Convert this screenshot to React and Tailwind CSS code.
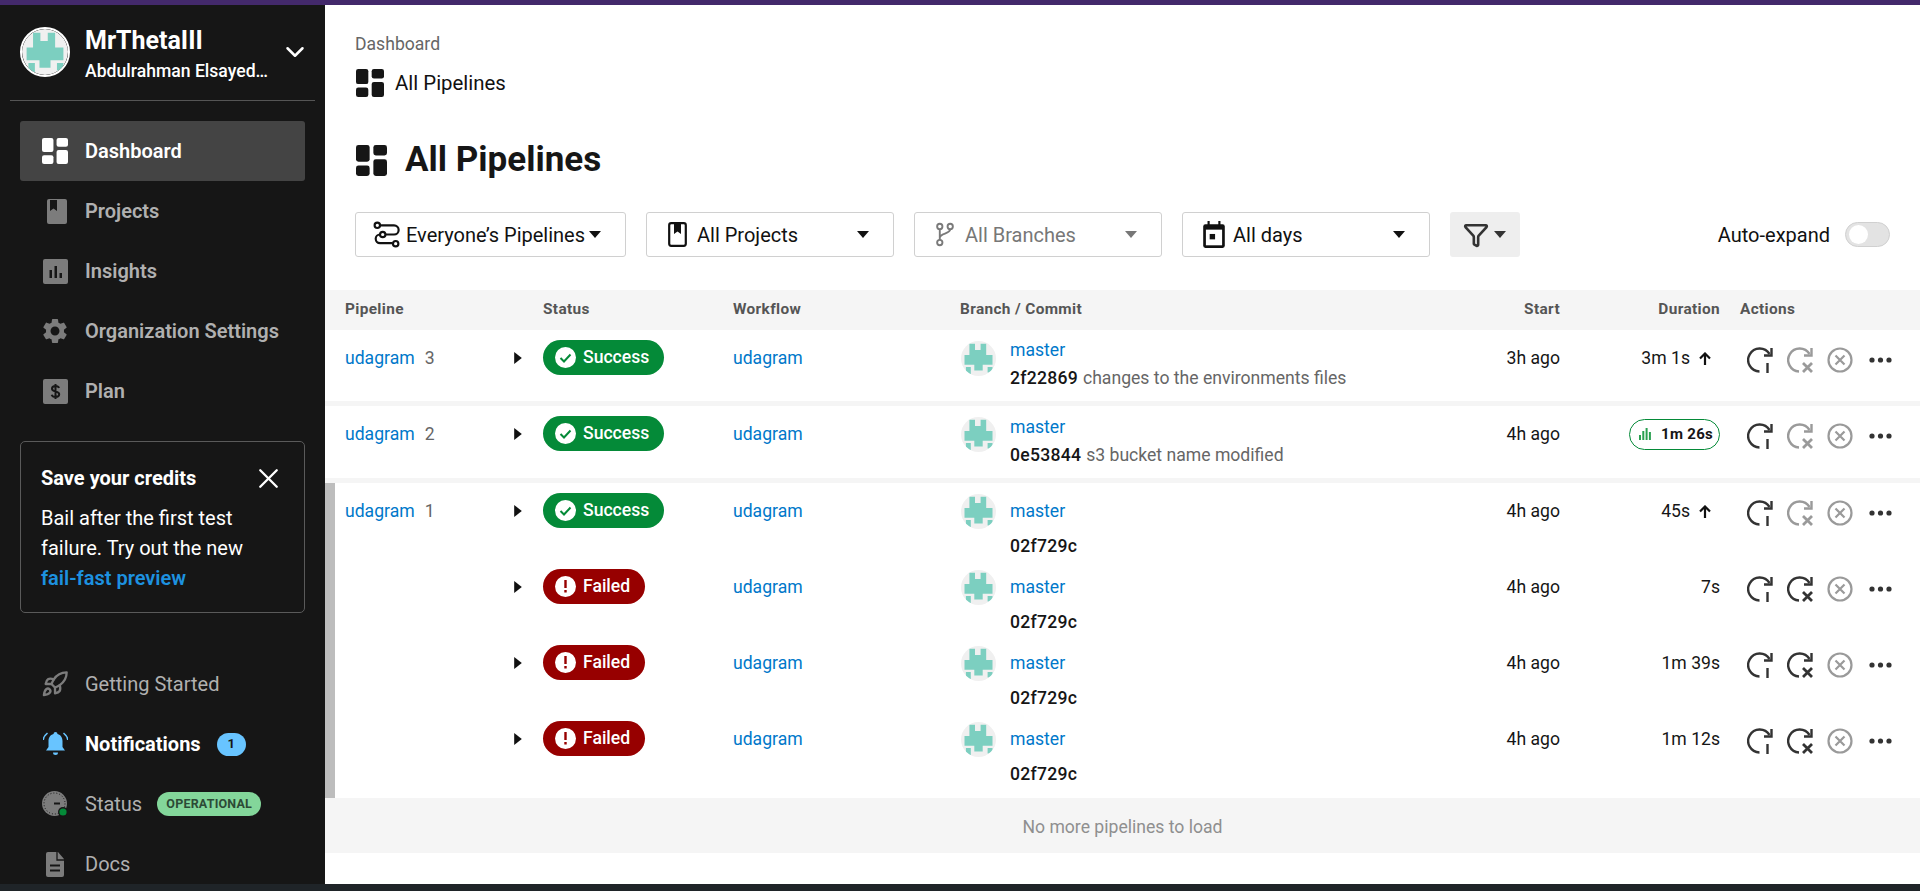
import React from "react";
import { MdSettings } from "react-icons/md";
import { Rocket, X, ChevronDown, Funnel } from "lucide-react";

const Dash = ({ className }) => (
  <svg viewBox="0 0 25 25" className={className} fill="currentColor">
    <rect x="0" y="0" width="11" height="13.5" rx="2" />
    <rect x="0" y="16.5" width="11" height="8.5" rx="2" />
    <rect x="14" y="0" width="11" height="8.5" rx="2" />
    <rect x="14" y="11.5" width="11" height="13.5" rx="2" />
  </svg>
);

const Avatar = ({ className }) => (
  <svg viewBox="0 0 50 50" className={className}>
    <clipPath id="avatarClip"><circle cx="25" cy="25" r="25" /></clipPath>
    <g clipPath="url(#avatarClip)">
      <rect width="50" height="50" fill="#f0f0f0" />
      <path d="M12 4h8v9h8V4h8v16h9v14H31v8H19v-8H5V20h7z" fill="#7ccfc0" />
      <path d="M7 37h7v10H7zM38 37h7v8h-7z" fill="#7ccfc0" />
    </g>
  </svg>
);

const NavBook = () => (
  <svg viewBox="0 0 25 25" className="w-[25px] h-[25px]" fill="#7c7c7c">
    <path d="M4 2a2 2 0 0 1 2-2h16a2 2 0 0 1 2 2v21a2 2 0 0 1-2 2H6a2 2 0 0 1-2-2z" />
    <path d="M6 0h7v11l-3.500-2.500L6 11z" fill="#161616" transform="translate(1 1)" />
  </svg>
);
const NavInsights = () => (
  <svg viewBox="0 0 25 25" className="w-[25px] h-[25px]">
    <rect width="25" height="25" rx="2" fill="#7c7c7c" />
    <path d="M6.500 11h2.500v8H6.500zM11.500 7h2.500v12h-2.500zM16.500 14h2.500v5h-2.500z" fill="#161616" />
  </svg>
);
const NavPlan = () => (
  <svg viewBox="0 0 25 25" className="w-[25px] h-[25px]">
    <rect width="25" height="25" rx="2" fill="#7c7c7c" />
    <path d="M16 9c-.5-1.500-2-2-3.500-2-2 0-3.500 1-3.500 2.700 0 3.600 7.200 2 7.200 5.600 0 1.800-1.700 2.700-3.700 2.700-1.700 0-3.300-.7-3.800-2.300M12.500 5v15" stroke="#161616" strokeWidth="2" fill="none" />
  </svg>
);
const NavBell = () => (
  <svg viewBox="0 0 25 25" className="w-[25px] h-[25px]" fill="#68c4ff">
    <path d="M12.500 0a2 2 0 0 1 2 2c3.500 1 5 4 5 7v6l2.500 3.500H3L5.500 15V9c0-3 1.500-6 5-7a2 2 0 0 1 2-2zM10 20.500h5a2.500 2.500 0 0 1-5 0z" />
    <path d="M4.500 1C2 3 .6 5 .2 8M20.500 1C23 3 24.400 5 24.800 8" stroke="#68c4ff" strokeWidth="1.600" fill="none" />
  </svg>
);
const NavStatus = () => (
  <svg viewBox="0 0 26 26" className="w-[26px] h-[26px]">
    <circle cx="12.500" cy="12.500" r="12.500" fill="#7c7c7c" />
    <circle cx="12.500" cy="12.500" r="10.500" fill="none" stroke="#161616" strokeWidth="1" strokeDasharray="1 2" />
    <path d="M12 11.500h6v2h-6z" fill="#161616" />
    <circle cx="21" cy="21" r="5" fill="#161616" />
    <circle cx="21" cy="21" r="3.600" fill="#048a38" />
  </svg>
);
const NavDoc = () => (
  <svg viewBox="0 0 25 25" className="w-[25px] h-[25px]">
    <path d="M5 0h10l6 7v16a2 2 0 0 1-2 2H5a2 2 0 0 1-2-2V2a2 2 0 0 1 2-2z" fill="#7c7c7c" />
    <path d="M14 0v8h7" fill="none" stroke="#161616" strokeWidth="1.300" />
    <path d="M7 12.500h10v2H7zM7 17.500h10v2H7z" fill="#161616" />
  </svg>
);

const Caret = ({ color = "#111" }) => (
  <svg viewBox="0 0 12 7" className="w-3 h-[7px]"><path d="M0 0h12L6 7z" fill={color} /></svg>
);

const IconPeople = () => (
  <svg viewBox="0 0 25 25" className="w-[27px] h-[27px]" fill="none" stroke="#111" strokeWidth="2">
    <circle cx="4" cy="4" r="2.500" />
    <path d="M6.500 4h13a3.500 3.500 0 0 1 0 8.500H6.500a3.500 3.500 0 0 0 0 8H18" />
    <circle cx="21" cy="21" r="2.500" />
    <circle cx="9" cy="12.500" r="2.500" fill="#fff" />
  </svg>
);
const IconProject = () => (
  <svg viewBox="0 0 19 25" className="w-[19px] h-[25px]" fill="none">
    <rect x="1.200" y="1.200" width="16.600" height="22.600" rx="2" stroke="#111" strokeWidth="2.200" />
    <path d="M6 1h7v11l-3.500-2.500L6 12z" fill="#111" />
  </svg>
);
const IconBranch = () => (
  <svg viewBox="0 0 19 25" className="w-[18px] h-[25px]" fill="none" stroke="#7a7a7a" strokeWidth="2">
    <circle cx="4" cy="4" r="2.800" /><circle cx="15" cy="4" r="2.800" /><circle cx="4" cy="21" r="2.800" />
    <path d="M4 7v11M15 7c0 5-11 4-11 9" />
  </svg>
);
const IconCal = () => (
  <svg viewBox="0 0 20 25" className="w-[22px] h-[27px]">
    <path d="M2 3h16a2 2 0 0 1 2 2v18a2 2 0 0 1-2 2H2a2 2 0 0 1-2-2V5a2 2 0 0 1 2-2z" fill="#111" />
    <rect x="4" y="0" width="2" height="4" fill="#111" /><rect x="14" y="0" width="2" height="4" fill="#111" />
    <rect x="2.500" y="8" width="15" height="14.500" fill="#fff" />
    <rect x="6" y="12" width="5" height="5" fill="#111" />
  </svg>
);

const Restart = ({ color }) => (
  <svg viewBox="0 0 26 26" className="w-[26px] h-[26px]" fill="none" stroke={color} strokeWidth="2.400">
    <path d="M22.500 7A11.500 11.500 0 1 0 12.500 24.500" />
    <path d="M24.500 1v7.500H17" />
    <path d="M20.500 16v10" />
  </svg>
);
const RerunFailed = ({ color }) => (
  <svg viewBox="0 0 26 26" className="w-[26px] h-[26px]" fill="none" stroke={color} strokeWidth="2.400">
    <path d="M22.500 7A11.500 11.500 0 1 0 12 24.500" />
    <path d="M24.500 1v7.500H17" />
    <path d="M16 16l9 9M25 16l-9 9" strokeWidth="2.800" />
  </svg>
);
const Cancel = () => (
  <svg viewBox="0 0 26 26" className="w-[26px] h-[26px]" fill="none" stroke="#9a9a9a" strokeWidth="2.200">
    <circle cx="13" cy="13" r="11.500" />
    <path d="M8.500 8.500l9 9M17.500 8.500l-9 9" />
  </svg>
);
const Dots = () => (
  <svg viewBox="0 0 23 6" className="w-[23px] h-[6px]" fill="#333">
    <circle cx="3" cy="3" r="2.600" /><circle cx="11.500" cy="3" r="2.600" /><circle cx="20" cy="3" r="2.600" />
  </svg>
);

const Actions = ({ failed }) => (
  <div className="flex items-center pl-[7px]">
    <Restart color="#333" />
    <div className="ml-[14px] flex"><RerunFailed color={failed ? "#333" : "#9a9a9a"} /></div>
    <div className="ml-[14px] flex"><Cancel /></div>
    <div className="ml-4 flex"><Dots /></div>
  </div>
);

const StatusPill = ({ failed }) => (
  <div className={`inline-flex h-[35px] items-center rounded-full pl-3 pr-[15px] gap-[7px] text-white font-medium text-[17.6px] ${failed ? "bg-[#970000]" : "bg-[#048a38]"}`}>
    <svg viewBox="0 0 21 21" className="w-[21px] h-[21px]">
      <circle cx="10.500" cy="10.500" r="10.500" fill="#fff" />
      {failed ? (
        <path d="M9.300 4h2.400v8H9.300zM9.300 14h2.400v2.600H9.300z" fill="#970000" />
      ) : (
        <path d="M5.500 11l3.500 3.500 6.500-7" stroke="#048a38" strokeWidth="2" fill="none" />
      )}
    </svg>
    {failed ? "Failed" : "Success"}
  </div>
);

const NavItem = ({ icon, children, active, bold, dim, extra }) => (
  <div className={`flex h-[60px] items-center rounded-[3px] pl-[22px] ${active ? "bg-[#444444]" : ""}`}>
    <div className="flex w-[26px] justify-center">{icon}</div>
    <span className={`ml-[17px] text-[20px] ${bold ? "font-bold text-white" : active ? "font-semibold text-white" : dim ? "font-normal text-[#b0b0b0]" : "font-semibold text-[#b0b0b0]"}`}>{children}</span>
    {extra}
  </div>
);

const FilterBtn = ({ icon, label, width, muted, spaced, pad, gap }) => (
  <div className={`flex h-[45px] items-center rounded-[3px] border border-[#d0d0d0] bg-white pr-[24px] ${pad} ${width} ${muted ? "text-[#777]" : "text-[#111]"}`}>
    <div className="flex shrink-0">{icon}</div>
    <span className={`text-[20px] whitespace-nowrap ${gap}`}>{label}</span>
    <div className={spaced ? "ml-auto flex" : "ml-[4px] flex"}><Caret color={muted ? "#777" : "#111"} /></div>
  </div>
);

const Row = ({ name, number, failed, commit, message, start, duration, h, textPad, commitClass = "", pad = "pl-5" }) => (
  <div className={`grid grid-cols-[198px_190px_227px_480px_120px_160px_180px] bg-white ${pad} ${h}`}>
    <div className="flex items-start pt-[14px]">
      <div className="flex h-[28px] w-[177px] items-center text-[17.6px]">
        {name && <span className="text-[#0078ca]">udagram</span>}
        {name && <span className="ml-[10px] text-[#666]">{number}</span>}
        <svg viewBox="0 0 7 11" className="ml-auto w-[8px] h-[12px]"><path d="M0 0l7 5.500L0 11z" fill="#111" /></svg>
      </div>
    </div>
    <div className="pt-[10px]"><StatusPill failed={failed} /></div>
    <div className="pt-[14px] text-[17.6px] text-[#0078ca]"><div className="flex h-[28px] items-center">udagram</div></div>
    <div className="flex pl-[1px]">
      <Avatar className="mt-[11px] h-[35px] w-[35px]" />
      <div className={`ml-[14px] flex flex-col ${textPad}`}>
        <div className="flex h-[28px] items-center text-[17.6px] text-[#0078ca]">master</div>
        <div className={`flex h-[28px] items-center text-[17.6px] whitespace-nowrap ${commitClass}`}>
          <span className="font-medium tracking-[0.25px] text-[#161616]">{commit}</span>
          {message && <span className="ml-[5px] text-[#666]">{message}</span>}
        </div>
      </div>
    </div>
    <div className="pt-[14px] text-[17.6px] text-right text-[#161616]"><div className="flex h-[28px] items-center justify-end">{start}</div></div>
    <div className="pt-[14px]"><div className="flex h-[28px] items-center justify-end text-[17.6px] text-[#161616]">{duration}</div></div>
    <div className="pt-[17px] pl-5"><Actions failed={failed} /></div>
  </div>
);

const Up = () => (
  <svg viewBox="0 0 12 13" className="ml-[9px] mr-[9px] w-3 h-[13px]" fill="none" stroke="#111" strokeWidth="2.200"><path d="M6 13V2M1 6.500L6 1.500l5 5" /></svg>
);

const Live = () => (
  <div className="flex h-[31px] w-[91px] items-center rounded-full border border-[#048a38] pl-[9px]">
    <svg viewBox="0 0 12 12" className="w-3 h-3" fill="#2aa050"><path d="M0 7h2v5H0zM3.300 3h2v9h-2zM6.600 0h2v12h-2zM9.900 4h2v8h-2z" /></svg>
    <span className="ml-[10px] text-[15px] font-bold tracking-[0.3px]">1m 26s</span>
  </div>
);

export default function App() {
  return (
    <div className="flex h-[891px] w-[1920px] flex-col overflow-hidden bg-white font-['Roboto',sans-serif]">
      <div className="h-[5px] bg-[#43296b]" />
      <div className="flex min-h-0 flex-1">
        <aside className="w-[325px] shrink-0 overflow-hidden bg-[#161616] text-white">
          <div className="mx-[10px] flex h-[96px] items-center border-b border-[#555] pb-[1px] pl-[10px] pr-[5px]">
            <Avatar className="h-[50px] w-[50px] shrink-0 rounded-full border-2 border-white" />
            <div className="ml-[15px] pt-[8px]">
              <div className="text-[25px] font-bold leading-[30px]">MrThetaIII</div>
              <div className="whitespace-nowrap text-[17.6px] font-medium leading-[30px]">Abdulrahman Elsayed…</div>
            </div>
            <ChevronDown className="ml-auto h-[30px] w-[30px]" strokeWidth={2} />
          </div>
          <nav className="px-5 pt-5">
            <NavItem active icon={<Dash className="h-[26px] w-[26px] text-white" />}>Dashboard</NavItem>
            <NavItem icon={<NavBook />}>Projects</NavItem>
            <NavItem icon={<NavInsights />}>Insights</NavItem>
            <NavItem icon={<MdSettings className="h-[30px] w-[30px] shrink-0 text-[#7c7c7c]" />}>Organization Settings</NavItem>
            <NavItem icon={<NavPlan />}>Plan</NavItem>
            <div className="mt-[20px] h-[172px] rounded-[5px] border border-[#5a5a5a] px-5 pt-[21px]">
              <div className="flex h-[30px] items-center justify-between text-[20px] font-bold">
                Save your credits
                <X className="-mr-[1px] h-[33px] w-[33px] shrink-0" strokeWidth={1.700} />
              </div>
              <div className="mt-[10px] text-[20px] leading-[30px]">
                <div>Bail after the first test</div>
                <div>failure. Try out the new</div>
                <div className="font-semibold text-[#1d92e0]">fail-fast preview</div>
              </div>
            </div>
            <div className="mt-[41px]">
              <NavItem dim icon={<Rocket className="h-[28px] w-[28px] shrink-0 text-[#7c7c7c]" strokeWidth={2} />}>Getting Started</NavItem>
              <NavItem bold icon={<NavBell />} extra={<span className="ml-4 flex h-[23px] w-[29px] items-center justify-center rounded-full bg-[#68c4ff] text-[13px] font-bold text-[#161616]">1</span>}>Notifications</NavItem>
              <NavItem dim icon={<NavStatus />} extra={<span className="ml-[15px] flex h-[24px] w-[104px] items-center justify-center rounded-full bg-[#83d69a] text-[12.500px] font-bold tracking-[0.2px] text-[#2c4a36]">OPERATIONAL</span>}>Status</NavItem>
              <NavItem dim icon={<NavDoc />}>Docs</NavItem>
            </div>
          </nav>
        </aside>
        <main className="min-w-0 flex-1">
          <div className="px-[30px]">
            <div className="pt-[28px] text-[17.6px] leading-[22px] text-[#666]">Dashboard</div>
            <div className="mt-[14px] flex h-[28px] items-center text-[20.400px] text-[#111]">
              <Dash className="ml-[1px] h-[28px] w-[28px] text-[#161616]" />
              <span className="ml-[11px]">All Pipelines</span>
            </div>
            <div className="mt-[43px] flex h-[40px] items-center">
              <Dash className="ml-[1px] h-[31px] w-[31px] text-[#161616]" />
              <h1 className="ml-[18px] text-[35px] font-bold text-[#161616]">All Pipelines</h1>
            </div>
            <div className="mt-[32px] flex items-center">
              <FilterBtn width="w-[271px]" pad="pl-[17px]" gap="ml-[6px]" icon={<IconPeople />} label="Everyone’s Pipelines" />
              <div className="ml-5"><FilterBtn width="w-[248px]" pad="pl-[21px]" gap="ml-[10px]" spaced icon={<IconProject />} label="All Projects" /></div>
              <div className="ml-5"><FilterBtn width="w-[248px]" pad="pl-[21px]" gap="ml-[11px]" spaced muted icon={<IconBranch />} label="All Branches" /></div>
              <div className="ml-5"><FilterBtn width="w-[248px]" pad="pl-[20px]" gap="ml-[8px]" spaced icon={<IconCal />} label="All days" /></div>
              <div className="ml-5 flex h-[45px] w-[70px] items-center rounded-[3px] bg-[#eeeeee] pl-[13px]">
                <Funnel className="h-[26px] w-[26px] text-[#333]" strokeWidth={2.400} />
                <div className="ml-[5px] flex"><Caret color="#333" /></div>
              </div>
              <span className="ml-auto text-[20px] text-[#111]">Auto-expand</span>
              <div className="ml-[15px] flex h-[25px] w-[45px] shrink-0 items-center rounded-full border border-[#d0d0d0] bg-[#e3e3e3] pl-[3px]">
                <div className="h-[19px] w-[19px] rounded-full bg-white" />
              </div>
            </div>
          </div>
          <div className="mt-[33px]">
            <div className="grid h-[40px] grid-cols-[198px_190px_227px_480px_120px_160px_180px] items-center bg-[#f5f5f5] pl-5 text-[15.400px] font-bold tracking-[0.35px] text-[#555]">
              <div>Pipeline</div>
              <div>Status</div>
              <div>Workflow</div>
              <div>Branch / Commit</div>
              <div className="text-right">Start</div>
              <div className="text-right">Duration</div>
              <div className="pl-5">Actions</div>
            </div>
            <div className="bg-[#f5f5f5]">
              <Row h="h-[71px]" textPad="pt-[6px]" name number="3" commit="2f22869" message="changes to the environments files" start="3h ago" duration={<>3m 1s<Up /></>} />
              <div className="mt-[5px]">
                <Row h="h-[72px]" textPad="pt-[7px]" name number="2" commit="0e53844" message="s3 bucket name modified" start="4h ago" duration={<Live />} />
              </div>
              <div className="mt-[5px] border-l-[10px] border-[#bdbdbd] bg-white pb-[11px]">
                <Row pad="pl-[10px]" h="h-[76px]" textPad="pt-[14px]" commitClass="mt-[7px]" name number="1" commit="02f729c" start="4h ago" duration={<>45s<Up /></>} />
                <Row pad="pl-[10px]" h="h-[76px]" textPad="pt-[14px]" commitClass="mt-[7px]" failed commit="02f729c" start="4h ago" duration="7s" />
                <Row pad="pl-[10px]" h="h-[76px]" textPad="pt-[14px]" commitClass="mt-[7px]" failed commit="02f729c" start="4h ago" duration="1m 39s" />
                <Row pad="pl-[10px]" h="h-[76px]" textPad="pt-[14px]" commitClass="mt-[7px]" failed commit="02f729c" start="4h ago" duration="1m 12s" />
              </div>
            </div>
            <div className="flex h-[55px] items-center justify-center bg-[#f5f5f5] pt-[4px] text-[17.6px] text-[#8f8f8f]">No more pipelines to load</div>
          </div>
        </main>
      </div>
      <div className="h-[7px] bg-[#1f2428]" />
    </div>
  );
}
